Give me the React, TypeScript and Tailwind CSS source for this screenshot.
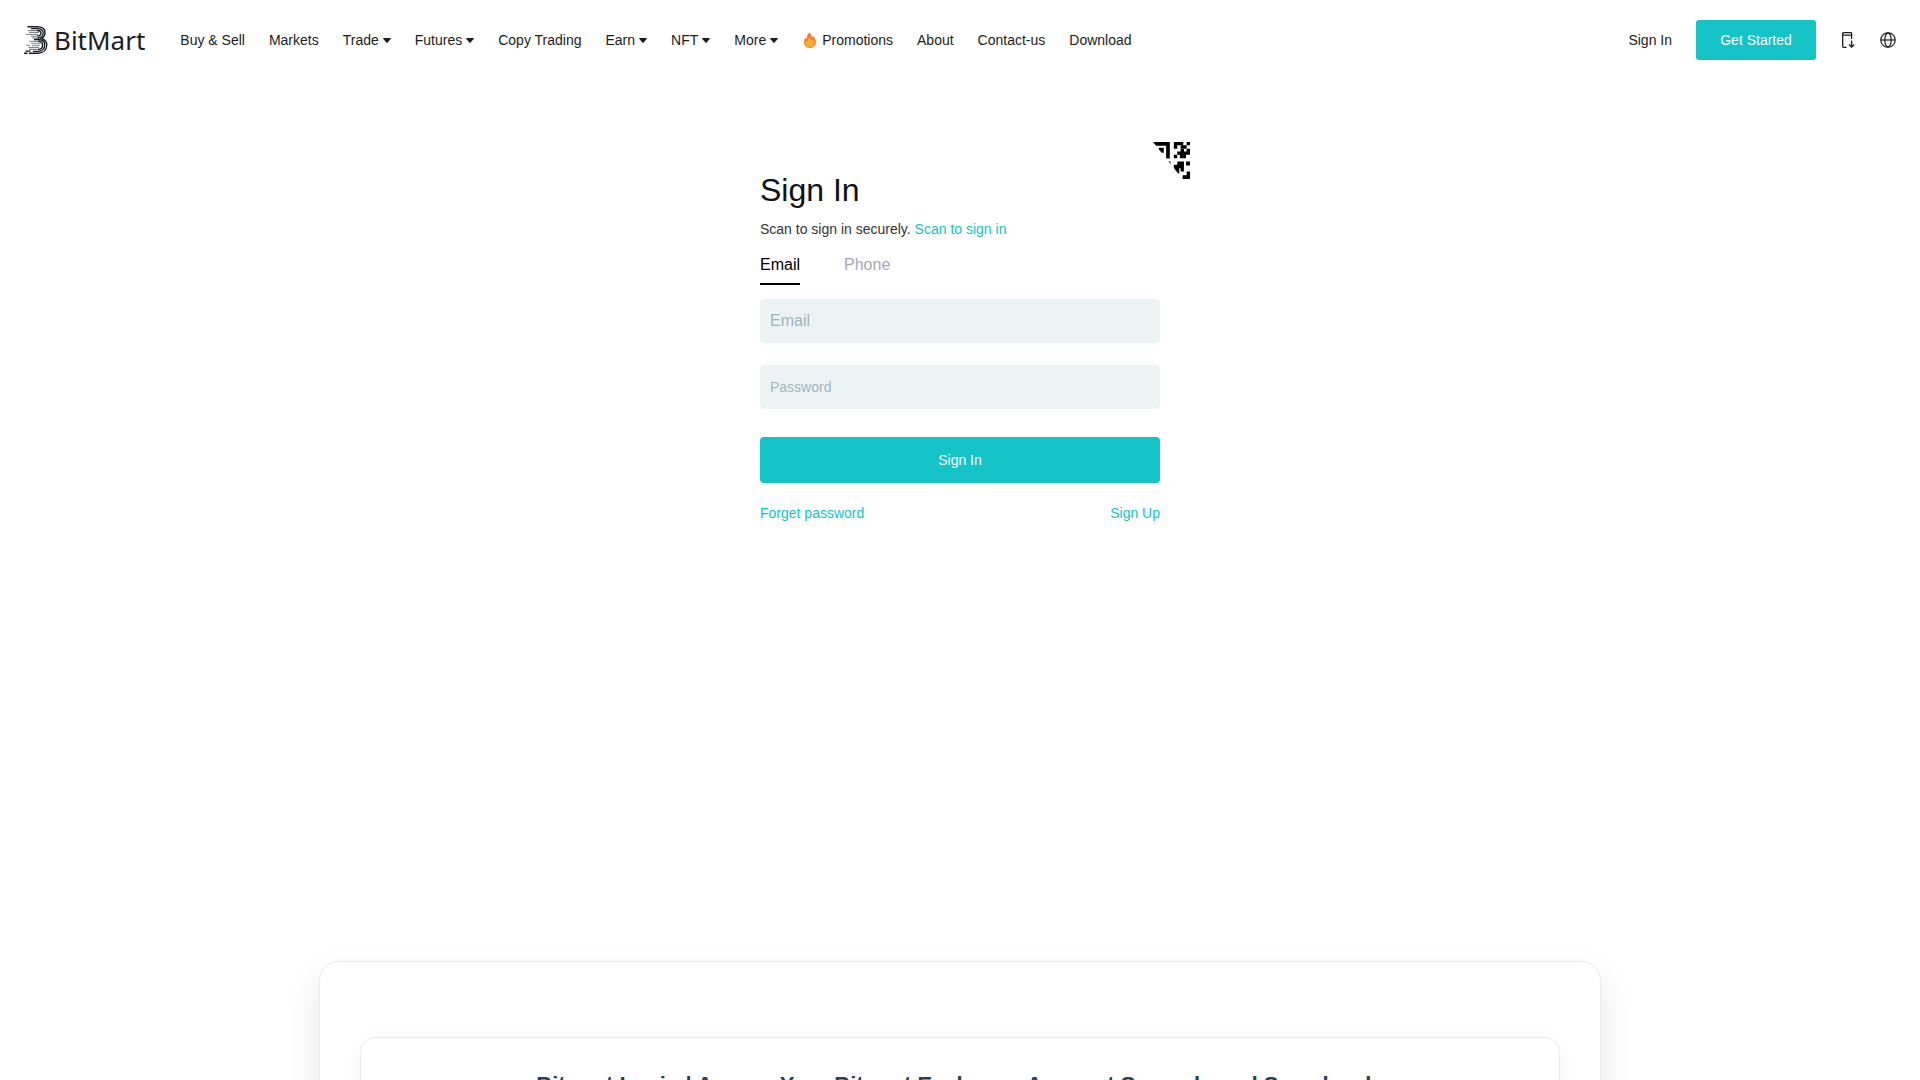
import { useState } from "react";
import type { ReactNode } from "react";

interface NavItem {
  label: string;
  menu?: boolean;
  icon?: ReactNode;
}

const navItems: NavItem[] = [
  { label: "Buy & Sell" },
  { label: "Markets" },
  { label: "Trade", menu: true },
  { label: "Futures", menu: true },
  { label: "Copy Trading" },
  { label: "Earn", menu: true },
  { label: "NFT", menu: true },
  { label: "More", menu: true },
  { label: "Promotions", icon: <Flame /> },
  { label: "About" },
  { label: "Contact-us" },
  { label: "Download" },
];

function Caret() {
  return (
    <svg viewBox="0 0 8 5" className="h-[5px] w-2" fill="currentColor" aria-hidden="true">
      <path d="M.8 0h6.4c.6 0 .9.7.5 1.1L4.6 4.6a.8.8 0 0 1-1.2 0L.3 1.1C-.1.7.2 0 .8 0z" />
    </svg>
  );
}

function Flame() {
  return (
    <svg viewBox="0 0 16 16" className="size-4" aria-hidden="true">
      <path
        d="M7.2.4C9.2 1.900 10 3.600 10.100 5.600c.5-.4.800-1 .900-1.900 1.800 1.900 2.900 4.300 2.900 6.300 0 3.500-2.400 5.900-5.900 5.900S2 13.500 2 10.200c0-2 .700-3.700 1.500-4.800.1.700.500 1.400 1 1.700C4.500 4.800 5.400 2.300 7.2.4z"
        fill="#f97a35"
      />
      <path
        d="M7.600 5.200c.9 1.300 1.500 2.300 2.200 3.200.5-.1 1-.4 1.300-.9.9 1.100 1.500 2.100 1.500 3.200 0 2.900-1.900 4.900-4.600 4.900s-4.700-2-4.700-4.600c0-1 .3-1.800.8-2.400.3.400.7.700 1.300.7.100-1.500.8-3.100 2.200-4.100z"
        fill="#fbab2b"
      />
    </svg>
  );
}

function LogoMark() {
  return (
    <svg viewBox="0 0 24 28" className="h-7 w-6" fill="none" stroke="#1b1d22" aria-hidden="true">
      <path d="M3.500.8H13c5 0 8 2.300 8 6 0 2.700-1.300 4.500-3.600 5.700 3.500 1 5.300 3.300 5.300 6.700 0 5-3.600 8-9.200 8H5M0 27.200h3.500" strokeWidth="1.400" />
      <path d="M7 2.700h6c3.800 0 6.200 1.500 6.200 4.300 0 3-2 5-5.500 5M10 13.500h4c4.200 0 6.700 2 6.700 5.600 0 4-2.800 6.200-7.200 6.200H9M1.500 25.200h5" strokeWidth="1.300" />
      <path d="M13 4.500c2.500 0 4 .9 4 2.500 0 2-1.500 3.100-4 3.100M14 15.300c3 0 4.600 1.400 4.600 3.900 0 2.600-1.800 4.200-5 4.200" strokeWidth="1.400" />
      <path d="M4 4.600h9M5 6.500h10M2 8.500h12M7 10.200h6M8 12h6M5 15.300h9M7 17.200h9.500M2 19.300h4M8 19.300h8M4.500 21.400H15M5 23.400h8" strokeWidth="1.100" opacity=".55" />
    </svg>
  );
}

function AppDownloadIcon() {
  return (
    <svg viewBox="0 0 16 16" className="size-4" fill="none" stroke="currentColor" strokeWidth="1.300" aria-hidden="true">
      <path d="M6.500 15.300H3.400a.7.700 0 0 1-.7-.7V1.400c0-.4.3-.7.700-.7h7.500c.4 0 .7.300.7.700V7M2.700 3.200h8.900M11.600 8.500v6.500M9 12.500l2.600 2.600 2.600-2.600" />
    </svg>
  );
}

function GlobeIcon() {
  return (
    <svg viewBox="0 0 16 16" className="size-4" fill="none" stroke="currentColor" strokeWidth="1.200" aria-hidden="true">
      <circle cx="8" cy="8" r="7.200" />
      <ellipse cx="8" cy="8" rx="3.200" ry="7.200" />
      <path d="M.8 8h14.400" />
    </svg>
  );
}

function QrCorner() {
  return (
    <svg viewBox="0 0 110 110" className="size-[37px]" fill="#000" aria-hidden="true">
      <clipPath id="corner">
        <path d="M0 0h110v110H88z" />
      </clipPath>
      <g clipPath="url(#corner)">
        <path d="M0 0h50v49H39V11H0z" />
        <path d="M17 17h15v15H17z" />
        <path d="M62 0h28v10H72v10H62zM100 0h10v10h-10z" />
        <path d="M82 10h18v10h10v18H98v10H80V38h-8v10H62V38h10V28h10v-8h10v-1H82zM92 20v8h8v-8z" fillRule="evenodd" />
        <path d="M42 58h10v10H42zM72 58h20v30H82V78h-4v16H62V68h10zM98 58h12v12H98zM100 88h10v22H88V99h12z" />
      </g>
    </svg>
  );
}

function Header() {
  return (
    <header className="flex h-20 items-center justify-between px-6">
      <div className="flex items-center gap-[35px]">
        <a href="#" className="flex items-center gap-1.5">
          <LogoMark />
          <span className="font-['Noto_Sans',sans-serif] text-[26px] leading-8">BitMart</span>
        </a>
        <nav className="flex items-center gap-6">
          {navItems.map((item) => (
            <a key={item.label} href="#" className="flex items-center gap-1 whitespace-nowrap">
              {item.icon}
              {item.label}
              {item.menu && <Caret />}
            </a>
          ))}
        </nav>
      </div>
      <div className="flex items-center gap-6">
        <a href="#" className="whitespace-nowrap">
          Sign In
        </a>
        <button className="h-10 w-[120px] rounded-[3px] bg-[#14c3c5] text-white">Get Started</button>
        <button aria-label="Download app">
          <AppDownloadIcon />
        </button>
        <button aria-label="Language">
          <GlobeIcon />
        </button>
      </div>
    </header>
  );
}

function SignInForm() {
  const [tab, setTab] = useState("Email");

  return (
    <section className="relative mx-auto w-full max-w-[400px] pt-[89px]">
      <button aria-label="QR code sign in" className="absolute top-[62px] -right-[30px]">
        <QrCorner />
      </button>
      <h1 className="text-[32px] leading-[42px] text-[#0e1118]">Sign In</h1>
      <p className="mt-2 leading-5 text-[#333]">
        Scan to sign in securely.{" "}
        <a href="#" className="text-[#14c3c5]">
          Scan to sign in
        </a>
      </p>
      <div className="mt-2.5 flex gap-11 text-base leading-6">
        {["Email", "Phone"].map((name) => (
          <button
            key={name}
            onClick={() => setTab(name)}
            className={
              name === tab
                ? "border-b-2 border-black pt-1 pb-1.5 text-black"
                : "border-b-2 border-transparent pt-1 pb-1.5 text-[#a6a8ba]"
            }
          >
            {name}
          </button>
        ))}
      </div>
      <form className="mt-3.5" onSubmit={(e) => e.preventDefault()}>
        <input
          type="text"
          aria-label={tab}
          placeholder={tab}
          className="block h-11 w-full rounded-[4px] bg-[#edf3f5] px-2.5 text-base outline-none placeholder:text-[#9fb5bd]"
        />
        <input
          type="password"
          aria-label="Password"
          placeholder="Password"
          className="mt-[22px] block h-11 w-full rounded-[4px] bg-[#edf3f5] px-2.5 outline-none placeholder:text-[#9fb5bd]"
        />
        <button type="submit" className="mt-7 block h-[46px] w-full rounded-[4px] bg-[#14c3c5] text-white">
          Sign In
        </button>
      </form>
      <div className="mt-5 flex justify-between leading-5 text-[#14c3c5]">
        <a href="#">Forget password</a>
        <a href="#">Sign Up</a>
      </div>
    </section>
  );
}

export default function App() {
  return (
    <div className="min-h-screen overflow-x-hidden bg-white font-['Liberation_Sans',Arial,sans-serif] text-sm text-[#1b1d22]">
      <Header />
      <main>
        <SignInForm />
        <section className="mx-auto mt-[438px] max-w-[1282px] rounded-[20px] border border-[#e9eaeb] px-10 pt-[75px] pb-10 shadow-[0_20px_40px_rgba(0,0,0,0.1)]">
          <article className="rounded-[15px] border border-[#e8eaec] px-10 pt-8 pb-10 shadow-[0_4px_20px_rgba(0,0,0,0.05)]">
            <h2 className="text-center text-[22px] leading-[30px] font-bold text-[#2c3e50]">
              Bitmart Login | Access Your Bitmart Exchange Account Securely and Seamlessly
            </h2>
          </article>
        </section>
      </main>
    </div>
  );
}
